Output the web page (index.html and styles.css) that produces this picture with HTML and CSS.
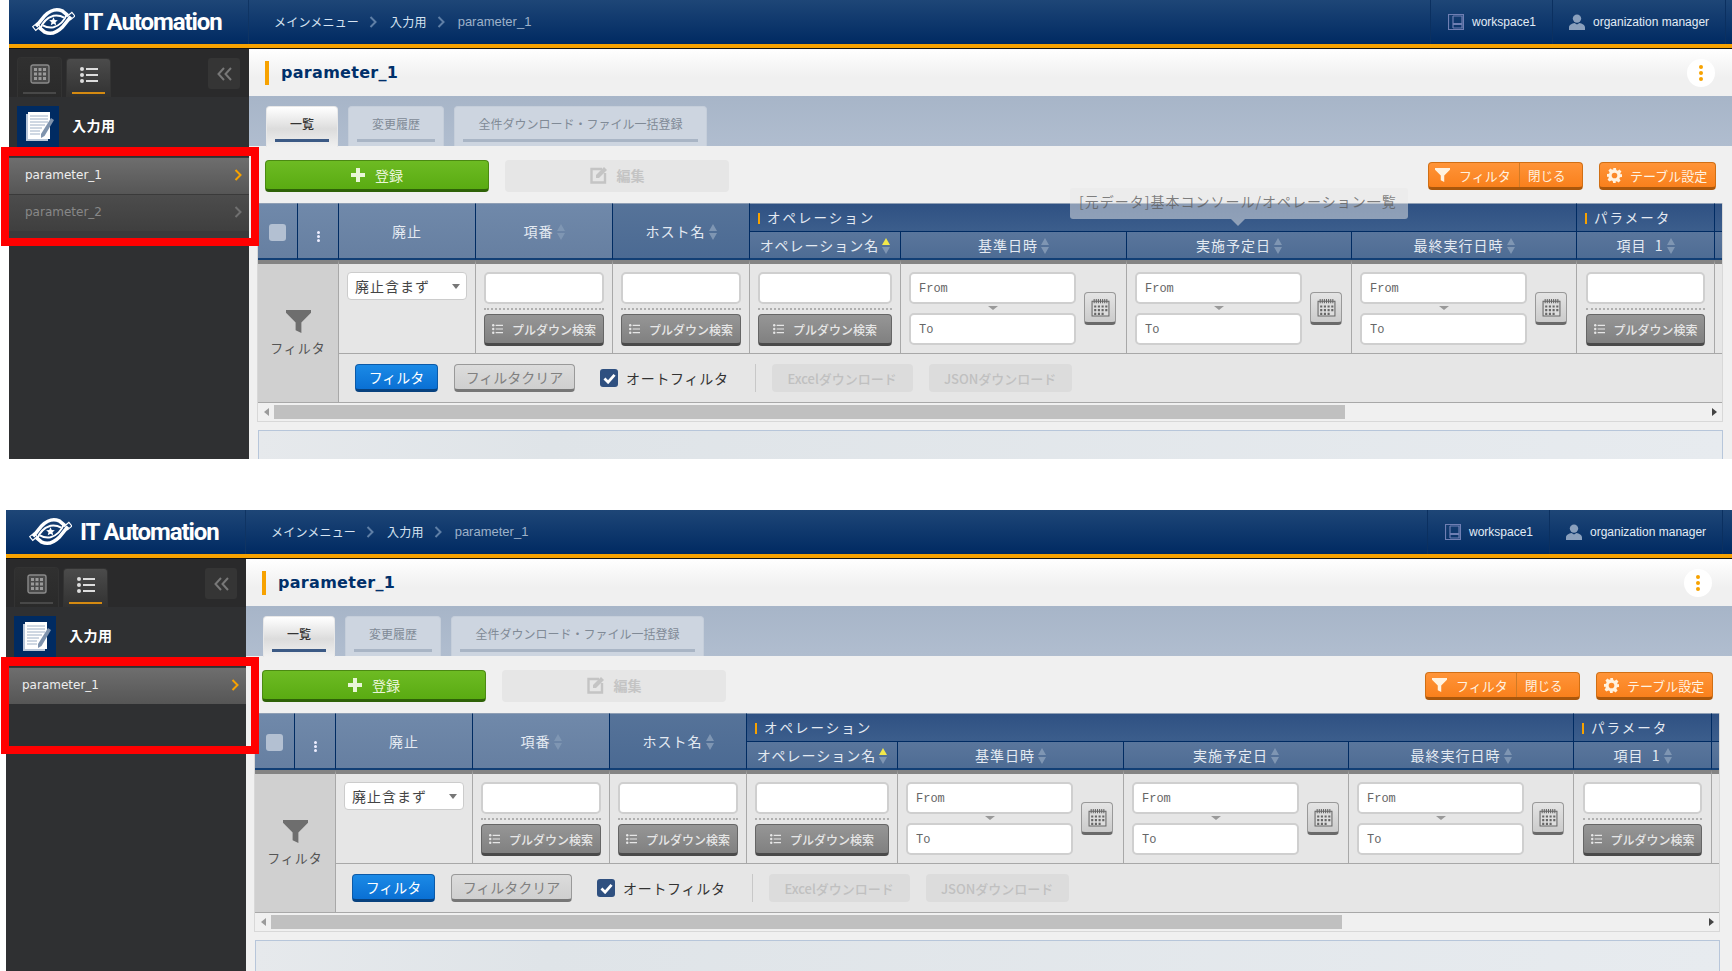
FILE: index.html
```html
<!DOCTYPE html>
<html lang="ja">
<head>
  <meta charset="UTF-8" />
  <title>parameter_1</title>
  <link rel="stylesheet" href="styles.css">
</head>
<body>
  <svg class="sprite" xmlns="http://www.w3.org/2000/svg">
    <symbol id="i-logo" viewBox="0 0 44 30">
      <path d="M4 20 L13 9 Q22 0 31 4 L37 9" fill="none" stroke="currentColor" stroke-width="3.600"/>
      <path d="M40 10 L31 21 Q22 30 13 26 L7 21" fill="none" stroke="currentColor" stroke-width="3.600"/>
      <path d="M8 23 Q12 12 22 9 Q28 8 33 11" fill="none" stroke="currentColor" stroke-width="2"/>
      <path d="M36 7 Q32 18 22 21 Q16 22 11 19" fill="none" stroke="currentColor" stroke-width="2"/>
      <path d="M22 10.500l1.300 3 3.200.3-2.400 2.100.7 3.100-2.800-1.600-2.800 1.600.7-3.100-2.400-2.100 3.200-.3z" fill="currentColor"/>
      <rect x="1" y="18" width="6" height="5" fill="none" stroke="currentColor" stroke-width="1.200" transform="rotate(-40 4 20)"/>
      <rect x="37" y="7" width="6" height="5" fill="none" stroke="currentColor" stroke-width="1.200" transform="rotate(-40 40 9)"/>
    </symbol>
    <symbol id="i-chevron" viewBox="0 0 8 12">
      <path d="M1.500 1 L6.500 6 L1.500 11" fill="none" stroke="currentColor" stroke-width="2"/>
    </symbol>
    <symbol id="i-workspace" viewBox="0 0 16 16">
      <path d="M.5.5h15v15H.5z M5 2v12 M5 2h9v7.500H5 M5 10.500h9V14H5" fill="none" stroke="currentColor" stroke-width="1.200"/>
    </symbol>
    <symbol id="i-user" viewBox="0 0 16 16">
      <circle cx="8" cy="4.600" r="4.200" fill="currentColor"/>
      <path d="M0 16v-2.500C0 11 3 9.500 5.500 9l2.500 1.500L10.500 9C13 9.500 16 11 16 13.500V16z" fill="currentColor"/>
    </symbol>
    <symbol id="i-grid" viewBox="0 0 20 20">
      <rect x="1" y="1" width="18" height="18" rx="2" fill="#4a4a4a" stroke="#8a8a8a" stroke-width="1.400"/>
      <path d="M4 4h3v3H4zM8.500 4h3v3h-3zM13 4h3v3h-3zM4 8.500h3v3H4zM8.500 8.500h3v3h-3zM13 8.500h3v3h-3zM4 13h3v3H4zM8.500 13h3v3h-3zM13 13h3v3h-3z" fill="#9a9a9a"/>
    </symbol>
    <symbol id="i-list" viewBox="0 0 18 16">
      <circle cx="2" cy="2" r="2" fill="currentColor"/><circle cx="2" cy="8" r="2" fill="currentColor"/><circle cx="2" cy="14" r="2" fill="currentColor"/>
      <path d="M6 1h12v2H6zM6 7h12v2H6zM6 13h12v2H6z" fill="currentColor"/>
    </symbol>
    <symbol id="i-double" viewBox="0 0 15 14">
      <path d="M7 1 L1.500 7 L7 13 M14 1 L8.500 7 L14 13" fill="none" stroke="currentColor" stroke-width="2"/>
    </symbol>
    <symbol id="i-note" viewBox="0 0 42 41">
      <path d="M9 8h22v27H9z" fill="#b9c7da"/>
      <path d="M11 6h22v27H11z" fill="#fff"/>
      <path d="M13 10h18M13 13h18M13 16h18M13 19h15M13 22h12M13 25h10M13 28h10" stroke="#9fb0c6" stroke-width="1"/>
      <path d="M24 28 L34 12 L37 14 L27.500 30 L24 32z" fill="#7f93ad"/>
    </symbol>
    <symbol id="i-funnel" viewBox="0 0 26 26">
      <path d="M0 1h26v3L16 14v11l-6-3V14L0 4z" fill="currentColor"/>
    </symbol>
    <symbol id="i-gear" viewBox="0 0 16 16">
      <path fill-rule="evenodd" d="M6.500 0h3l.4 2.200 1.500.6L13.300 1.500l2.100 2.100-1.300 1.900.6 1.500L16 6.500v3l-2.200.4-.6 1.500 1.300 1.900-2.100 2.100-1.900-1.300-1.500.6L9.500 16h-3l-.4-2.200-1.500-.6-1.900 1.300L.6 12.400l1.300-1.900-.6-1.500L0 9.500v-3l2.200-.4.6-1.500L1.500 2.700 3.600.6l1.900 1.300 1.500-.6zM8 5a3 3 0 1 0 0 6 3 3 0 0 0 0-6z" fill="currentColor"/>
    </symbol>
    <symbol id="i-edit" viewBox="0 0 18 18">
      <path d="M12 3H1.500v13.500H15V7" fill="none" stroke="currentColor" stroke-width="2.400"/>
      <path d="M6 9 L14 1 L17 4 L9 12 L6 12z" fill="currentColor"/>
    </symbol>
    <symbol id="i-plus" viewBox="0 0 14 14">
      <path d="M5 0h4v5h5v4H9v5H5V9H0V5h5z" fill="currentColor"/>
    </symbol>
    <symbol id="i-sort" viewBox="0 0 8 16">
      <path d="M4 0l4 7H0zM4 16l4-7H0z" fill="#7f96b3"/>
    </symbol>
    <symbol id="i-sort-asc" viewBox="0 0 8 16">
      <path d="M4 0l4 7H0z" fill="#f2e84a"/><path d="M4 16l4-7H0z" fill="#7f96b3"/>
    </symbol>
    <symbol id="i-calendar" viewBox="0 0 18 18">
      <path d="M1 3h16v14H1z" fill="#ddd" stroke="#666"/>
      <path d="M3 1v4M5 1v4M7 1v4M9 1v4M11 1v4M13 1v4M15 1v4" stroke="#666"/>
      <path d="M3 7h2v2H3zM6.500 7h2v2h-2zM10 7h2v2h-2zM13.500 7h2v2h-2zM3 10.500h2v2H3zM6.500 10.500h2v2h-2zM10 10.500h2v2h-2zM13.500 10.500h2v2h-2zM3 14h2v2H3zM6.500 14h2v2h-2zM10 14h2v2h-2z" fill="#666"/>
    </symbol>
    <symbol id="i-check" viewBox="0 0 14 12">
      <path d="M1.500 6 L5.500 10 L12.500 2" fill="none" stroke="#fff" stroke-width="3"/>
    </symbol>
  </svg>

  <!-- screenshot 1: two menu items -->
  <div class="shot shot-a">
    <header class="topbar">
      <div class="brand">
        <svg class="brand-logo"><use href="#i-logo"/></svg>
        <span class="brand-name">IT Automation</span>
      </div>
      <nav class="crumbs">
        <span>メインメニュー</span><svg class="crumb-sep"><use href="#i-chevron"/></svg>
        <span>入力用</span><svg class="crumb-sep"><use href="#i-chevron"/></svg>
        <span class="crumb-now">parameter_1</span>
      </nav>
      <div class="user-item user-ws"><svg class="user-icon ws"><use href="#i-workspace"/></svg>workspace1</div>
      <div class="user-item user-org"><svg class="user-icon"><use href="#i-user"/></svg>organization manager</div>
    </header>
    <div class="body-row">
      <aside class="sidebar">
        <div class="side-top">
          <button class="side-tab"><svg class="side-tab-icon"><use href="#i-grid"/></svg></button>
          <button class="side-tab active"><svg class="side-tab-icon list"><use href="#i-list"/></svg></button>
          <button class="side-collapse"><svg><use href="#i-double"/></svg></button>
        </div>
        <div class="side-group">
          <span class="side-group-icon"><svg><use href="#i-note"/></svg></span>
          <span class="side-group-name">入力用</span>
        </div>
        <ul class="side-menu">
          <li class="side-item current">parameter_1<svg><use href="#i-chevron"/></svg></li>
          <li class="side-item">parameter_2<svg><use href="#i-chevron"/></svg></li>
          <li class="side-strip"></li>
        </ul>
      </aside>
      <main class="main">
        <div class="title-bar">
          <h1>parameter_1</h1>
          <span class="title-menu"><i></i><i></i><i></i></span>
        </div>
        <div class="tabs">
          <div class="tab active"><span>一覧</span></div>
          <div class="tab w2"><span>変更履歴</span></div>
          <div class="tab w3"><span>全件ダウンロード・ファイル一括登録</span></div>
        </div>
        <div class="toolbar">
          <button class="btn-add"><svg><use href="#i-plus"/></svg>登録</button>
          <button class="btn-edit"><svg><use href="#i-edit"/></svg>編集</button>
          <div class="toolbar-right">
            <div class="btn-orange split">
              <span class="split-main"><svg class="ic-funnel"><use href="#i-funnel"/></svg>フィルタ</span>
              <span class="split-close">閉じる</span>
            </div>
            <div class="btn-orange setting"><svg class="ic-gear"><use href="#i-gear"/></svg>テーブル設定</div>
          </div>
        </div>
        <div class="table-wrap">
          <table class="grid">
            <colgroup>
              <col class="c40"><col class="c41"><col class="c137"><col class="c137"><col class="c137"><col class="c151">
              <col class="c226"><col class="c225"><col class="c225"><col class="c138"><col class="c8">
            </colgroup>
            <thead>
              <tr class="head-top">
                <th rowspan="2" class="light"><span class="head-check"></span></th>
                <th rowspan="2" class="light"><span class="head-dots"><i></i><i></i><i></i></span></th>
                <th rowspan="2" class="light">廃止</th>
                <th rowspan="2" class="light">項番<svg class="sort"><use href="#i-sort"/></svg></th>
                <th rowspan="2" class="mid">ホスト名<svg class="sort"><use href="#i-sort"/></svg></th>
                <th colspan="4" class="group"><span class="group-bar"></span>オペレーション</th>
                <th class="group"><span class="group-bar"></span>パラメータ</th>
                <th class="group"></th>
              </tr>
              <tr class="head-sub">
                <th>オペレーション名<svg class="sort"><use href="#i-sort-asc"/></svg></th>
                <th>基準日時<svg class="sort"><use href="#i-sort"/></svg></th>
                <th>実施予定日<svg class="sort"><use href="#i-sort"/></svg></th>
                <th>最終実行日時<svg class="sort"><use href="#i-sort"/></svg></th>
                <th>項目&nbsp;&nbsp;1<svg class="sort"><use href="#i-sort"/></svg></th>
                <th></th>
              </tr>
            </thead>
            <tbody>
              <tr class="filter-row">
                <td rowspan="2" colspan="2" class="filter-label">
                  <svg><use href="#i-funnel"/></svg>
                  <div>フィルタ</div>
                </td>
                <td class="top"><span class="select-box"><select class="f-select"><option>廃止含まず</option></select></span></td>
                <td><input class="f-input" type="text"><div class="dots"></div><button class="btn-pull"><svg><use href="#i-list"/></svg>プルダウン検索</button></td>
                <td><input class="f-input" type="text"><div class="dots"></div><button class="btn-pull"><svg><use href="#i-list"/></svg>プルダウン検索</button></td>
                <td><input class="f-input" type="text"><div class="dots"></div><button class="btn-pull"><svg><use href="#i-list"/></svg>プルダウン検索</button></td>
                <td><div class="date"><div class="date-inputs"><input class="f-input" placeholder="From"><div class="date-arrow"></div><input class="f-input" placeholder="To"></div><button class="btn-cal"><svg><use href="#i-calendar"/></svg></button></div></td>
                <td><div class="date"><div class="date-inputs"><input class="f-input" placeholder="From"><div class="date-arrow"></div><input class="f-input" placeholder="To"></div><button class="btn-cal"><svg><use href="#i-calendar"/></svg></button></div></td>
                <td><div class="date"><div class="date-inputs"><input class="f-input" placeholder="From"><div class="date-arrow"></div><input class="f-input" placeholder="To"></div><button class="btn-cal"><svg><use href="#i-calendar"/></svg></button></div></td>
                <td class="tight"><input class="f-input" type="text"><div class="dots"></div><button class="btn-pull"><svg><use href="#i-list"/></svg>プルダウン検索</button></td>
                <td></td>
              </tr>
              <tr class="action-row">
                <td colspan="9">
                  <div class="actions">
                    <button class="btn-filter">フィルタ</button>
                    <button class="btn-clear">フィルタクリア</button>
                    <label class="auto"><span class="auto-box"><svg><use href="#i-check"/></svg></span>オートフィルタ</label>
                    <span class="actions-sep"></span>
                    <button class="btn-off excel">Excelダウンロード</button>
                    <button class="btn-off json">JSONダウンロード</button>
                  </div>
                </td>
              </tr>
            </tbody>
          </table>
          <div class="hscroll">
            <span class="arrow-left"></span>
            <div class="hscroll-track"><div class="hscroll-thumb"></div></div>
            <span class="arrow-right"></span>
          </div>
        </div>
        <div class="footer-box"></div>
      </main>
    </div>
    <div class="tip">[元データ]基本コンソール/オペレーション一覧</div>
  </div>

  <!-- screenshot 2: one menu item -->
  <div class="shot shot-b">
    <header class="topbar">
      <div class="brand">
        <svg class="brand-logo"><use href="#i-logo"/></svg>
        <span class="brand-name">IT Automation</span>
      </div>
      <nav class="crumbs">
        <span>メインメニュー</span><svg class="crumb-sep"><use href="#i-chevron"/></svg>
        <span>入力用</span><svg class="crumb-sep"><use href="#i-chevron"/></svg>
        <span class="crumb-now">parameter_1</span>
      </nav>
      <div class="user-item user-ws"><svg class="user-icon ws"><use href="#i-workspace"/></svg>workspace1</div>
      <div class="user-item user-org"><svg class="user-icon"><use href="#i-user"/></svg>organization manager</div>
    </header>
    <div class="body-row">
      <aside class="sidebar">
        <div class="side-top">
          <button class="side-tab"><svg class="side-tab-icon"><use href="#i-grid"/></svg></button>
          <button class="side-tab active"><svg class="side-tab-icon list"><use href="#i-list"/></svg></button>
          <button class="side-collapse"><svg><use href="#i-double"/></svg></button>
        </div>
        <div class="side-group">
          <span class="side-group-icon"><svg><use href="#i-note"/></svg></span>
          <span class="side-group-name">入力用</span>
        </div>
        <ul class="side-menu">
          <li class="side-item current">parameter_1<svg><use href="#i-chevron"/></svg></li>
        </ul>
      </aside>
      <main class="main">
        <div class="title-bar">
          <h1>parameter_1</h1>
          <span class="title-menu"><i></i><i></i><i></i></span>
        </div>
        <div class="tabs">
          <div class="tab active"><span>一覧</span></div>
          <div class="tab w2"><span>変更履歴</span></div>
          <div class="tab w3"><span>全件ダウンロード・ファイル一括登録</span></div>
        </div>
        <div class="toolbar">
          <button class="btn-add"><svg><use href="#i-plus"/></svg>登録</button>
          <button class="btn-edit"><svg><use href="#i-edit"/></svg>編集</button>
          <div class="toolbar-right">
            <div class="btn-orange split">
              <span class="split-main"><svg class="ic-funnel"><use href="#i-funnel"/></svg>フィルタ</span>
              <span class="split-close">閉じる</span>
            </div>
            <div class="btn-orange setting"><svg class="ic-gear"><use href="#i-gear"/></svg>テーブル設定</div>
          </div>
        </div>
        <div class="table-wrap">
          <table class="grid">
            <colgroup>
              <col class="c40"><col class="c41"><col class="c137"><col class="c137"><col class="c137"><col class="c151">
              <col class="c226"><col class="c225"><col class="c225"><col class="c138"><col class="c8">
            </colgroup>
            <thead>
              <tr class="head-top">
                <th rowspan="2" class="light"><span class="head-check"></span></th>
                <th rowspan="2" class="light"><span class="head-dots"><i></i><i></i><i></i></span></th>
                <th rowspan="2" class="light">廃止</th>
                <th rowspan="2" class="light">項番<svg class="sort"><use href="#i-sort"/></svg></th>
                <th rowspan="2" class="mid">ホスト名<svg class="sort"><use href="#i-sort"/></svg></th>
                <th colspan="4" class="group"><span class="group-bar"></span>オペレーション</th>
                <th class="group"><span class="group-bar"></span>パラメータ</th>
                <th class="group"></th>
              </tr>
              <tr class="head-sub">
                <th>オペレーション名<svg class="sort"><use href="#i-sort-asc"/></svg></th>
                <th>基準日時<svg class="sort"><use href="#i-sort"/></svg></th>
                <th>実施予定日<svg class="sort"><use href="#i-sort"/></svg></th>
                <th>最終実行日時<svg class="sort"><use href="#i-sort"/></svg></th>
                <th>項目&nbsp;&nbsp;1<svg class="sort"><use href="#i-sort"/></svg></th>
                <th></th>
              </tr>
            </thead>
            <tbody>
              <tr class="filter-row">
                <td rowspan="2" colspan="2" class="filter-label">
                  <svg><use href="#i-funnel"/></svg>
                  <div>フィルタ</div>
                </td>
                <td class="top"><span class="select-box"><select class="f-select"><option>廃止含まず</option></select></span></td>
                <td><input class="f-input" type="text"><div class="dots"></div><button class="btn-pull"><svg><use href="#i-list"/></svg>プルダウン検索</button></td>
                <td><input class="f-input" type="text"><div class="dots"></div><button class="btn-pull"><svg><use href="#i-list"/></svg>プルダウン検索</button></td>
                <td><input class="f-input" type="text"><div class="dots"></div><button class="btn-pull"><svg><use href="#i-list"/></svg>プルダウン検索</button></td>
                <td><div class="date"><div class="date-inputs"><input class="f-input" placeholder="From"><div class="date-arrow"></div><input class="f-input" placeholder="To"></div><button class="btn-cal"><svg><use href="#i-calendar"/></svg></button></div></td>
                <td><div class="date"><div class="date-inputs"><input class="f-input" placeholder="From"><div class="date-arrow"></div><input class="f-input" placeholder="To"></div><button class="btn-cal"><svg><use href="#i-calendar"/></svg></button></div></td>
                <td><div class="date"><div class="date-inputs"><input class="f-input" placeholder="From"><div class="date-arrow"></div><input class="f-input" placeholder="To"></div><button class="btn-cal"><svg><use href="#i-calendar"/></svg></button></div></td>
                <td class="tight"><input class="f-input" type="text"><div class="dots"></div><button class="btn-pull"><svg><use href="#i-list"/></svg>プルダウン検索</button></td>
                <td></td>
              </tr>
              <tr class="action-row">
                <td colspan="9">
                  <div class="actions">
                    <button class="btn-filter">フィルタ</button>
                    <button class="btn-clear">フィルタクリア</button>
                    <label class="auto"><span class="auto-box"><svg><use href="#i-check"/></svg></span>オートフィルタ</label>
                    <span class="actions-sep"></span>
                    <button class="btn-off excel">Excelダウンロード</button>
                    <button class="btn-off json">JSONダウンロード</button>
                  </div>
                </td>
              </tr>
            </tbody>
          </table>
          <div class="hscroll">
            <span class="arrow-left"></span>
            <div class="hscroll-track"><div class="hscroll-thumb"></div></div>
            <span class="arrow-right"></span>
          </div>
        </div>
        <div class="footer-box"></div>
      </main>
    </div>
  </div>

  <div class="mark mark-a"></div>
  <div class="mark mark-b"></div>
</body>
</html>
```

FILE: styles.css
```css
* { box-sizing: border-box; }
html, body { height: 971px; overflow: hidden; }
body { margin: 0; background: #fff; position: relative; color: #333; font-family: "Noto Sans CJK JP", "Liberation Sans", sans-serif; font-size: 13px; }
button { font-family: inherit; padding: 0; cursor: pointer; }
.sprite { display: none; }

.shot { width: 1726px; display: flex; flex-direction: column; overflow: hidden; position: relative; }
.shot-a { margin-left: 9px; height: 459px; }
.shot-b { margin-left: 6px; margin-top: 51px; height: 461px; }

/* header */
.topbar { height: 49px; flex: none; display: flex; align-items: center; background: linear-gradient(#1e4677, #002a62) 0 0 / 100% 44px no-repeat, #000; border-bottom: 1px solid #111; box-shadow: inset 0 -4px 0 #f7a200; padding-bottom: 5px; padding-right: 9px; }
.brand { width: 240px; height: 44px; flex: none; display: flex; align-items: center; border-right: 1px solid #0f3463; padding-left: 23px; }
.brand-logo { width: 43px; height: 29px; color: #fff; flex: none; }
.brand-name { margin-left: 8px; color: #fff; font: bold 24px "Liberation Sans Narrow", "Roboto", sans-serif; letter-spacing: -1.1px; white-space: nowrap; }
.crumbs { flex: 1; display: flex; align-items: center; padding-left: 25px; color: #d7e4f2; font-size: 12px; letter-spacing: .2px; }
.crumb-sep { width: 8px; height: 12px; margin: 0 13px 0 10px; color: #5f7fa6; }
.crumb-now { color: #9db1c9; font: 13px "Liberation Sans", sans-serif; letter-spacing: 0; }
.user-item { height: 44px; display: flex; align-items: center; border-left: 1px solid #0b3060; color: #e2ecf6; font: 12px "Liberation Sans", sans-serif; white-space: nowrap; }
.user-ws { width: 122px; padding-left: 17px; }
.user-org { width: 174px; padding-left: 16px; border-right: 1px solid #0b3060; }
.user-icon { width: 16px; height: 16px; margin-right: 8px; color: #8aa0bd; }
.user-icon.ws { color: #6f7fb3; }

.body-row { flex: 1; display: flex; min-height: 0; }

/* sidebar */
.sidebar { width: 240px; flex: none; background: #2f3032; }
.side-top { height: 48px; background: #2a2a2b; display: flex; align-items: flex-end; padding-left: 8px; position: relative; }
.side-tab { width: 45px; height: 40px; border: 1px solid #333; border-bottom: 0; border-radius: 4px 4px 0 0; background: linear-gradient(#303030, #2a2a2a); margin-right: 4px; position: relative; display: flex; justify-content: center; padding-top: 6px; color: #ddd; }
.side-tab::after { content: ""; position: absolute; left: 5px; right: 5px; bottom: 3px; height: 2px; background: #484848; }
.side-tab.active { background: linear-gradient(#4b4b4b, #323232); height: 39px; }
.side-tab.active::after { background: #d58a11; }
.side-tab-icon { width: 20px; height: 20px; }
.side-tab-icon.list { width: 18px; height: 16px; margin-top: 2px; }
.side-collapse { position: absolute; left: 199px; top: 9px; width: 32px; height: 31px; border: 0; border-radius: 3px; background: #353535; color: #787878; display: flex; align-items: center; justify-content: center; }
.side-collapse svg { width: 15px; height: 14px; }
.side-group { display: flex; align-items: center; padding: 9px 8px 10px; }
.side-group-icon { width: 42px; height: 41px; background: #002b62; }
.side-group-icon svg { width: 42px; height: 41px; display: block; }
.side-group-name { margin: -4px 0 0 13px; color: #fff; font-size: 14px; font-weight: 700; letter-spacing: .5px; }
.side-menu { list-style: none; margin: 0; padding: 0; }
.side-item { height: 37px; display: flex; align-items: center; justify-content: space-between; padding: 0 7px 2px 16px; font: 12px "DejaVu Sans", sans-serif; color: #888; background: linear-gradient(#4c4c4c, #3f3f3f); border-top: 1px solid #3a3a3a; }
.side-item svg { width: 8px; height: 12px; color: #707070; }
.side-item.current { color: #eee; background: linear-gradient(#6e6e6e, #565656); }
.side-item.current svg { color: #f7a200; }
.side-strip { height: 8px; background: #3a3a3b; }

/* main */
.main { flex: 1; min-width: 0; display: flex; flex-direction: column; background: #f0f0f0; }
.title-bar { height: 47px; flex: none; background: linear-gradient(#fff, #f0f0f0 60%); display: flex; align-items: center; padding: 0 20px 0 16px; }
.title-bar h1 { flex: 1; margin: 0; color: #00306a; font: bold 16px "DejaVu Sans", sans-serif; letter-spacing: .3px; border-left: 4px solid #f7a200; padding-left: 12px; line-height: 24px; }
.title-menu { width: 28px; height: 28px; border-radius: 50%; background: #fff; display: flex; flex-direction: column; align-items: center; justify-content: center; gap: 2px; }
.title-menu i { width: 4px; height: 4px; border-radius: 50%; background: #f7a200; }

.tabs { height: 50px; flex: none; display: flex; align-items: flex-end; padding-left: 17px; gap: 10px; background: linear-gradient(#a7b5c8, #b0bdcf); }
.tab { width: 72px; height: 40px; padding: 0 8px; border-radius: 4px 4px 0 0; border: 1px solid #c5ceda; border-bottom: 0; background: #cdd5e0; color: #808a96; text-align: center; font-size: 12px; }
.tab span { display: block; height: 35px; line-height: 33px; border-bottom: 3px solid #a9b5c5; white-space: nowrap; }
.tab.w2 { width: 96px; }
.tab.w3 { width: 253px; }
.tab.active { height: 41px; margin-bottom: -1px; background: linear-gradient(#fff, #dcdcdc 55%, #f0f0f0); color: #333; border-color: #e8e8e8; font-weight: 500; }
.tab.active span { border-color: #3c5a85; }

.toolbar { height: 57px; flex: none; display: flex; align-items: flex-start; padding: 14px 19px 0 16px; }
.btn-add { width: 224px; height: 32px; border: 1px solid #4b8a12; border-bottom: 3px solid #2f6208; border-radius: 4px; background: linear-gradient(#6dbb23, #5aab12); color: #eaf6d8; font-size: 14px; display: flex; align-items: center; justify-content: center; gap: 10px; }
.btn-add svg { width: 14px; height: 14px; }
.btn-edit { width: 224px; height: 32px; margin-left: 16px; border: 0; padding-bottom: 2px; border-radius: 4px; background: #e6e6e6; color: #c4c4c4; font-size: 14px; font-weight: 700; display: flex; align-items: center; justify-content: center; gap: 9px; }
.btn-edit svg { width: 18px; height: 18px; }
.toolbar-right { margin-left: auto; display: flex; gap: 16px; padding-top: 2px; }
.btn-orange { height: 28px; border: 1px solid #d06f14; border-bottom: 3px solid #a9570c; border-radius: 4px; background: linear-gradient(#ff9438, #f9801c); color: #fff2e0; font-size: 13px; display: flex; align-items: center; white-space: nowrap; }
.split { width: 155px; }
.split-main { width: 91px; height: 100%; display: flex; align-items: center; padding-left: 6px; gap: 9px; border-right: 1px solid #cf7a26; }
.split-close { flex: 1; padding-left: 8px; font-size: 12.5px; }
.ic-funnel { width: 15px; height: 16px; color: #fff2e0; }
.setting { width: 117px; padding-left: 7px; gap: 8px; }
.ic-gear { width: 15px; height: 15px; color: #fff2e0; }

/* table */
.table-wrap { width: 1466px; margin-left: 8px; flex: none; overflow: hidden; border: 1px solid #d8d8d8; border-width: 0 1px 1px 1px; }
.grid { width: 1465px; table-layout: fixed; border-collapse: separate; border-spacing: 0; }
.c40 { width: 40px; } .c41 { width: 41px; } .c137 { width: 137px; } .c151 { width: 151px; }
.c226 { width: 226px; } .c225 { width: 225px; } .c138 { width: 138px; } .c8 { width: 8px; }
.grid th { padding: 0; color: #e4eaf2; font-weight: 400; font-size: 14px; letter-spacing: 1px; text-align: center; border-right: 1px solid #002b62; border-top: 1px solid #8f9fb5; white-space: nowrap; }
.grid th.light { background: linear-gradient(#7089aa, #667fa1); }
.grid th.mid { background: linear-gradient(#567399, #4b6a93); }
.grid th[rowspan], .head-sub th { border-bottom: 2px solid #123f75; }
.head-top th { height: 29px; }
.head-top th.group { background: linear-gradient(#2f5183, #3c5e8c); border-bottom: 1px solid #002b62; text-align: left; padding: 0 0 2px 8px; letter-spacing: 2px; font-size: 13.5px; }
.group-bar { display: inline-block; width: 2px; height: 11px; margin-right: 7px; background: #f7a200; vertical-align: -1px; }
.head-sub th { height: 28px; background: linear-gradient(#5a769c, #4e6c94); border-top: 0; font-size: 14px; }
.sort { width: 8px; height: 16px; margin-left: 3px; vertical-align: -3px; }
.head-check { display: inline-block; width: 17px; height: 17px; border-radius: 3px; background: #b3c0d2; vertical-align: middle; }
.head-dots { display: inline-flex; flex-direction: column; gap: 1px; vertical-align: 2px; }
.head-dots i { width: 3px; height: 3px; background: #eef; border-radius: 50%; }

.grid td { background: #e6e6e6; border-right: 1px solid #a8a8a8; border-bottom: 1px solid #a8a8a8; vertical-align: top; }
.filter-row td { height: 94px; border-top: 4px solid #848484; padding: 8px 8px 0; }
.filter-row td.tight { padding: 8px 9px 0; }
.filter-label { background: #d0d0d0 !important; text-align: center; color: #555; font-size: 13px; vertical-align: top; letter-spacing: 1px; }
.grid .filter-label { padding-top: 45px; }
.filter-label svg { display: block; width: 25px; height: 25px; margin: 0 auto 4px; color: #6e6e6e; }
.select-box { display: block; position: relative; width: 120px; }
.select-box::after { content: ""; position: absolute; right: 7px; top: 12px; border: 4px solid transparent; border-top: 5px solid #777; border-bottom: 0; }
.f-select { width: 120px; height: 28px; appearance: none; border: 1px solid #ccc; border-radius: 4px; background: #fff; padding: 0 0 0 7px; font: 14px "Noto Sans CJK JP", sans-serif; letter-spacing: 1px; color: #444; }
.f-input { display: block; width: 100%; height: 32px; border: 2px solid #cfcfcf; border-radius: 5px; background: #fff; padding: 2px 8px 0; font: 12px "Liberation Mono", monospace; }
.f-input::placeholder { color: #666; opacity: 1; }
.dots { height: 0; margin: 4px 0 4px; border-top: 2px dotted #b0b0b0; }
.btn-pull { display: flex; align-items: center; justify-content: center; width: 100%; height: 32px; border: 1px solid #666; border-bottom: 3px solid #4a4a4a; border-radius: 4px; background: linear-gradient(#969696, #808080); color: #e6e6e6; font-size: 12px; font-weight: 500; white-space: nowrap; gap: 9px; }
.btn-pull svg { width: 11px; height: 10px; }
.date { display: flex; align-items: center; }
.date-inputs { width: 167px; }
.date-arrow { width: 0; margin: 2px auto 3px; height: 4px; border: 5px solid transparent; border-top: 4px solid #999; border-bottom: 0; }
.btn-cal { margin-left: 8px; width: 32px; height: 33px; border: 1px solid #999; border-bottom: 3px solid #6a6a6a; border-radius: 4px; background: linear-gradient(#e4e4e4, #cbcbcb); display: flex; align-items: center; justify-content: center; }
.btn-cal svg { width: 19px; height: 19px; }

.action-row td { height: 49px; padding: 0; vertical-align: middle; border-right: 0; }
.actions { display: flex; align-items: center; padding-left: 16px; height: 48px; white-space: nowrap; }
.btn-filter { width: 83px; height: 28px; border: 1px solid #0b5aa8; border-bottom: 3px solid #08427f; border-radius: 4px; background: linear-gradient(#1b8ae6, #0a70d4); color: #fff; font-size: 14px; }
.btn-clear { width: 121px; height: 28px; margin-left: 16px; border: 1px solid #999; border-bottom: 3px solid #777; border-radius: 4px; background: linear-gradient(#dcdcdc, #cfcfcf); color: #808080; font-size: 14px; }
.auto { display: flex; align-items: center; margin-left: 25px; font-size: 14px; letter-spacing: .7px; color: #333; }
.auto-box { width: 18px; height: 18px; border-radius: 3px; background: #2f5080; margin-right: 8px; display: flex; align-items: center; justify-content: center; }
.auto-box svg { width: 13px; height: 11px; }
.actions-sep { width: 1px; height: 28px; background: #c8c8c8; margin-left: 26px; }
.btn-off { height: 28px; border: 0; border-radius: 4px; background: #dcdcdc; color: #c0c0c0; font-size: 13px; font-weight: 500; }
.excel { width: 141px; margin-left: 16px; }
.json { width: 143px; margin-left: 16px; }

.hscroll { height: 18px; display: flex; align-items: center; background: #f0f0f0; }
.arrow-left, .arrow-right { width: 16px; flex: none; display: flex; justify-content: center; }
.arrow-left::before { content: ""; border: 4px solid transparent; border-right: 5px solid #9a9a9a; border-left: 0; }
.arrow-right::before { content: ""; border: 4px solid transparent; border-left: 5px solid #444; border-right: 0; }
.hscroll-track { flex: 1; height: 14px; }
.hscroll-thumb { width: 1071px; height: 14px; background: #c0c0c0; }

.footer-box { width: 1465px; margin: 8px 0 0 9px; flex: 1; border: 1px solid #b7c6da; border-bottom: 0; background: linear-gradient(100deg, #e6e9ec, #dfe4e8 20%, #e7ebef); }

/* tooltip and red marks sit over the shots */
.tip { position: absolute; left: 1061px; top: 188px; width: 338px; height: 31px; border-radius: 3px; background: rgba(232, 232, 232, .5); color: rgba(90, 90, 90, .75); font-size: 14px; line-height: 26px; padding-left: 9px; letter-spacing: 1px; white-space: nowrap; }
.tip::after { content: ""; position: absolute; left: 161px; bottom: -7px; border: 7px solid transparent; border-top: 7px solid rgba(232, 232, 232, .5); border-bottom: 0; }
.mark { position: absolute; left: 1px; width: 258px; border: 8px solid #f00; border-top-width: 9px; }
.mark-a { top: 147px; height: 99px; }
.mark-b { top: 657px; height: 97px; }
```
